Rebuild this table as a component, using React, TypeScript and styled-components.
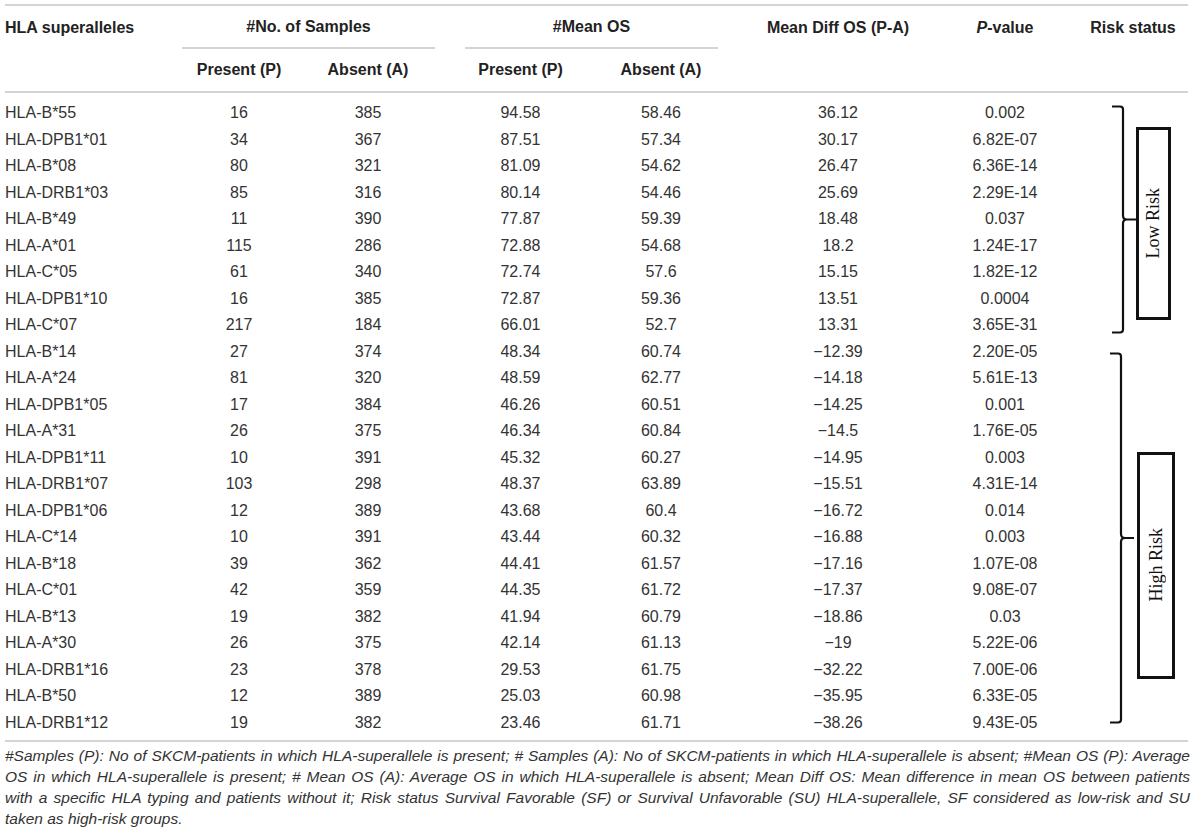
import React from "react";
import styled, { createGlobalStyle } from "styled-components";

const COLS = "175px 118px 140px 25px 115px 166px 188px 146px 110px";
const ROW_H = 26.5;

const Global = createGlobalStyle`
  html, body { margin: 0; padding: 0; background: #ffffff; }
  body { font-family: "Liberation Sans", Arial, Helvetica, sans-serif; color: #333333; }
`;

const Page = styled.div`
  width: 1200px;
  height: 840px;
  box-sizing: border-box;
  padding: 4px 0 0 5px;
  overflow: hidden;
`;

const Table = styled.div`
  width: 1183px;
`;

const Header = styled.div`
  display: grid;
  grid-template-columns: ${COLS};
  grid-template-rows: 43px 42px;
  border-top: 2px solid #d4d4d4;
  border-bottom: 2px solid #d4d4d4;
`;

const HeadCell = styled.div<{ $col: string; $row: number; $left?: boolean; $rule?: boolean; $ruleRight?: number }>`
  grid-column: ${(p) => p.$col};
  grid-row: ${(p) => p.$row};
  display: flex;
  align-items: center;
  justify-content: ${(p) => (p.$left ? "flex-start" : "center")};
  font-size: 16px;
  font-weight: 700;
  color: #222222;
  white-space: nowrap;
  ${(p) =>
    p.$rule
      ? `border-bottom: 2px solid #d4d4d4; margin: 0 ${p.$ruleRight ?? 0}px 0 2px;`
      : ""}
`;

const Body = styled.div`
  padding: 7px 0 4px;
  border-bottom: 2px solid #d4d4d4;
`;

const Group = styled.div<{ $h: number }>`
  display: grid;
  grid-template-columns: ${COLS};
  grid-auto-rows: ${(p) => p.$h}px;
`;

const Cell = styled.div<{ $col: number; $left?: boolean }>`
  grid-column: ${(p) => p.$col};
  display: flex;
  align-items: center;
  justify-content: ${(p) => (p.$left ? "flex-start" : "center")};
  font-size: 16px;
  color: #333333;
  white-space: nowrap;
`;

const RiskCell = styled.div<{ $rows: number; $padLeft: number }>`
  grid-column: 9;
  grid-row: 1 / span ${(p) => p.$rows};
  display: flex;
  align-items: flex-start;
  padding-left: ${(p) => p.$padLeft}px;
`;

const BraceSvg = styled.svg<{ $top: number }>`
  display: block;
  flex: none;
  margin-top: ${(p) => p.$top}px;
`;

const RiskBox = styled.div<{ $top: number; $w: number; $h: number; $gap: number }>`
  flex: none;
  box-sizing: border-box;
  margin-top: ${(p) => p.$top}px;
  margin-left: ${(p) => p.$gap}px;
  width: ${(p) => p.$w}px;
  height: ${(p) => p.$h}px;
  border: 3px solid #111111;
  display: flex;
  align-items: center;
  justify-content: center;
`;

const RiskLabel = styled.span`
  writing-mode: vertical-rl;
  transform: rotate(180deg);
  font-family: "Liberation Serif", "Times New Roman", serif;
  font-size: 18px;
  color: #111111;
  white-space: nowrap;
`;

const Foot = styled.div`
  padding-top: 3px;
  width: 1185px;
`;

const FootLine = styled.div<{ $last?: boolean }>`
  font-size: 15.5px;
  font-style: italic;
  line-height: 21px;
  color: #333333;
  white-space: nowrap;
  text-align: justify;
  text-align-last: ${(p) => (p.$last ? "left" : "justify")};
`;

type Row = [string, string, string, string, string, string, string];

const low: Row[] = [
  ["HLA-B*55", "16", "385", "94.58", "58.46", "36.12", "0.002"],
  ["HLA-DPB1*01", "34", "367", "87.51", "57.34", "30.17", "6.82E-07"],
  ["HLA-B*08", "80", "321", "81.09", "54.62", "26.47", "6.36E-14"],
  ["HLA-DRB1*03", "85", "316", "80.14", "54.46", "25.69", "2.29E-14"],
  ["HLA-B*49", "11", "390", "77.87", "59.39", "18.48", "0.037"],
  ["HLA-A*01", "115", "286", "72.88", "54.68", "18.2", "1.24E-17"],
  ["HLA-C*05", "61", "340", "72.74", "57.6", "15.15", "1.82E-12"],
  ["HLA-DPB1*10", "16", "385", "72.87", "59.36", "13.51", "0.0004"],
  ["HLA-C*07", "217", "184", "66.01", "52.7", "13.31", "3.65E-31"],
];

const high: Row[] = [
  ["HLA-B*14", "27", "374", "48.34", "60.74", "\u221212.39", "2.20E-05"],
  ["HLA-A*24", "81", "320", "48.59", "62.77", "\u221214.18", "5.61E-13"],
  ["HLA-DPB1*05", "17", "384", "46.26", "60.51", "\u221214.25", "0.001"],
  ["HLA-A*31", "26", "375", "46.34", "60.84", "\u221214.5", "1.76E-05"],
  ["HLA-DPB1*11", "10", "391", "45.32", "60.27", "\u221214.95", "0.003"],
  ["HLA-DRB1*07", "103", "298", "48.37", "63.89", "\u221215.51", "4.31E-14"],
  ["HLA-DPB1*06", "12", "389", "43.68", "60.4", "\u221216.72", "0.014"],
  ["HLA-C*14", "10", "391", "43.44", "60.32", "\u221216.88", "0.003"],
  ["HLA-B*18", "39", "362", "44.41", "61.57", "\u221217.16", "1.07E-08"],
  ["HLA-C*01", "42", "359", "44.35", "61.72", "\u221217.37", "9.08E-07"],
  ["HLA-B*13", "19", "382", "41.94", "60.79", "\u221218.86", "0.03"],
  ["HLA-A*30", "26", "375", "42.14", "61.13", "\u221219", "5.22E-06"],
  ["HLA-DRB1*16", "23", "378", "29.53", "61.75", "\u221232.22", "7.00E-06"],
  ["HLA-B*50", "12", "389", "25.03", "60.98", "\u221235.95", "6.33E-05"],
  ["HLA-DRB1*12", "19", "382", "23.46", "61.71", "\u221238.26", "9.43E-05"],
];

const DATA_COLS = [1, 2, 3, 5, 6, 7, 8];

type RiskCfg = {
  label: string;
  padLeft: number;
  braceTop: number;
  braceH: number;
  boxTop: number;
  boxW: number;
  boxH: number;
  boxGap: number;
};

const Brace: React.FC<{ top: number; h: number }> = ({ top, h }) => {
  const m = h / 2;
  const d = `M0,1.5 H8 Q11,1.5 11,4.5 V${m - 4} Q11,${m} 15,${m} H24 M15,${m} Q11,${m} 11,${m + 4} V${h - 4.5} Q11,${h - 1.5} 8,${h - 1.5} H0`;
  return (
    <BraceSvg $top={top} width={24} height={h} viewBox={`0 0 24 ${h}`}>
      <path d={d} fill="none" stroke="#111" strokeWidth={2.2} />
    </BraceSvg>
  );
};

const RowGroup: React.FC<{ rows: Row[]; risk: RiskCfg }> = ({ rows, risk }) => (
  <Group $h={ROW_H}>
    <RiskCell $rows={rows.length} $padLeft={risk.padLeft}>
      <Brace top={risk.braceTop} h={risk.braceH} />
      <RiskBox $top={risk.boxTop} $w={risk.boxW} $h={risk.boxH} $gap={risk.boxGap}>
        <RiskLabel>{risk.label}</RiskLabel>
      </RiskBox>
    </RiskCell>
    {rows.map((r) =>
      r.map((v, i) => (
        <Cell key={r[0] + i} $col={DATA_COLS[i]} $left={i === 0}>
          {v}
        </Cell>
      ))
    )}
  </Group>
);

export default function App() {
  return (
    <Page>
      <Global />
      <Table>
        <Header>
          <HeadCell $col="1" $row={1} $left>HLA superalleles</HeadCell>
          <HeadCell $col="2 / span 2" $row={1} $rule $ruleRight={3}>#No. of Samples</HeadCell>
          <HeadCell $col="5 / span 2" $row={1} $rule $ruleRight={26}>#Mean OS</HeadCell>
          <HeadCell $col="7" $row={1}>Mean Diff OS (P-A)</HeadCell>
          <HeadCell $col="8" $row={1}>
            <i>P</i>-value
          </HeadCell>
          <HeadCell $col="9" $row={1}>Risk status</HeadCell>
          <HeadCell $col="2" $row={2}>Present (P)</HeadCell>
          <HeadCell $col="3" $row={2}>Absent (A)</HeadCell>
          <HeadCell $col="5" $row={2}>Present (P)</HeadCell>
          <HeadCell $col="6" $row={2}>Absent (A)</HeadCell>
        </Header>
        <Body>
          <RowGroup
            rows={low}
            risk={{ label: "Low Risk", padLeft: 34, braceTop: 5, braceH: 229, boxTop: 27, boxW: 35, boxH: 193, boxGap: 0 }}
          />
          <RowGroup
            rows={high}
            risk={{ label: "High Risk", padLeft: 32, braceTop: 13, braceH: 372, boxTop: 113, boxW: 38, boxH: 227, boxGap: 3 }}
          />
        </Body>
      </Table>
      <Foot>
        <FootLine>
          #Samples (P): No of SKCM-patients in which HLA-superallele is present; # Samples (A): No of SKCM-patients in which HLA-superallele is absent; #Mean OS (P): Average
        </FootLine>
        <FootLine>
          OS in which HLA-superallele is present; # Mean OS (A): Average OS in which HLA-superallele is absent; Mean Diff OS: Mean difference in mean OS between patients
        </FootLine>
        <FootLine>
          with a specific HLA typing and patients without it; Risk status Survival Favorable (SF) or Survival Unfavorable (SU) HLA-superallele, SF considered as low-risk and SU
        </FootLine>
        <FootLine $last>taken as high-risk groups.</FootLine>
      </Foot>
    </Page>
  );
}
